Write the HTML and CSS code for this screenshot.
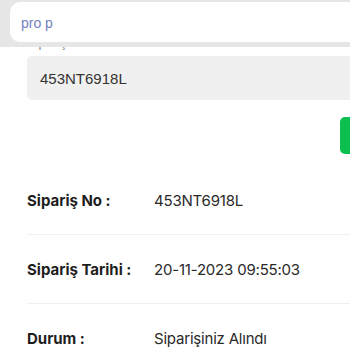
FILE: index.html
```html
<!DOCTYPE html>
<html lang="tr">
<head>
    <meta charset="UTF-8">
    <meta name="viewport" content="width=device-width, initial-scale=1.0">
    <title>Sipariş Takip</title>
    <link rel="stylesheet" href="styles.css">
</head>
<body>
    <div class="topbar">
        <div class="search">pro p</div>
    </div>
    <div class="content">
        <div class="form-clip">
            <label class="field-label" for="orderNo">Sipariş Numarası</label>
        </div>
        <input class="field" type="text" id="orderNo" value="453NT6918L">
        <div class="actions">
            <button class="btn-query"></button>
        </div>
        <div class="details">
            <div class="row">
                <span class="key">Sipariş No :</span>
                <span class="val">453NT6918L</span>
            </div>
            <div class="row">
                <span class="key">Sipariş Tarihi :</span>
                <span class="val">20-11-2023 09:55:03</span>
            </div>
            <div class="row">
                <span class="key">Durum :</span>
                <span class="val">Siparişiniz Alındı</span>
            </div>
        </div>
    </div>
</body>
</html>
```

FILE: styles.css
```css
body {
    margin: 0;
    font-family: "Liberation Sans", Arial, sans-serif;
    background: #fff;
    overflow: hidden;
}
.topbar {
    background: #e6e6e6;
    height: 47px;
    padding: 2px 0 0 10px;
    box-sizing: border-box;
    overflow: hidden;
}
.search {
    width: 360px;
    height: 40px;
    background: #fff;
    border-radius: 10px;
    box-sizing: border-box;
    padding: 1px 11px 0;
    line-height: 40px;
    font-size: 14px;
    color: #7580c0;
}
.content {
    padding-left: 27px;
}
.form-clip {
    height: 5px;
    overflow: hidden;
}
.field-label {
    display: block;
    margin-top: -12px;
    font-size: 13px;
    color: #888;
}
.field {
    display: block;
    width: 340px;
    height: 44px;
    margin: 4px 0 0;
    padding: 0 13px;
    box-sizing: border-box;
    border: none;
    border-radius: 5px;
    background: #f0f0f0;
    font-family: "Liberation Sans", Arial, sans-serif;
    font-size: 15px;
    color: #333;
    outline: none;
}
.actions {
    display: flex;
    justify-content: flex-end;
    padding-top: 17px;
    margin-right: -20px;
}
.btn-query {
    width: 30px;
    height: 37px;
    border: none;
    border-radius: 5px;
    background: #0bc04f;
}
.details {
    margin-top: 12px;
    font-family: Inter, "Noto Sans", sans-serif;
    font-size: 15px;
    color: #222;
}
.row {
    display: flex;
    align-items: center;
    height: 68px;
    border-bottom: 1px solid #f0f0f0;
}
.row:last-child {
    border-bottom: none;
}
.key {
    width: 127px;
    flex: none;
    font-weight: 700;
    color: #1e1e1e;
}
.val {
    color: #2a2a2a;
    letter-spacing: -0.2px;
}
```
